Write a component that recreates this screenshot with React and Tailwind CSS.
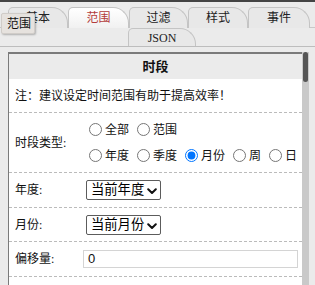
import React from 'react';

const serif = { fontFamily: '"Liberation Serif", "Noto Sans CJK SC", serif' };

const tabs = [
    { label: '基本', w: 'w-[60px]' },
    { label: '范围', w: 'w-[61px]', active: true },
    { label: '过滤', w: 'w-[59px]' },
    { label: '样式', w: 'w-[60px]' },
    { label: '事件', w: 'w-[62px]' },
];

function Tab({ label, w, active, h = 'h-[21px]' }) {
    return (
        <div
            className={`${w} ${h} shrink-0 flex items-center justify-center border-l border-t border-r border-[#c4c4c4] rounded-tl-[5px] rounded-tr-[16px] text-[12px] ${
                active ? 'bg-gradient-to-b from-white to-[#f1f1f1] text-[#b33c3c]' : 'bg-[#e8e8e8] text-[#222]'
            }`}
        >
            {label}
        </div>
    );
}

function Chevron() {
    return (
        <svg width="10" height="7" viewBox="0 0 10 7" className="absolute right-[3px] top-[7px]">
            <path d="M1.2 1.2 L5 5 L8.8 1.2" fill="none" stroke="#111" strokeWidth="2" strokeLinecap="round" strokeLinejoin="round" />
        </svg>
    );
}

function Select({ value }) {
    return (
        <div className="relative w-[75px] h-[20px] ml-[2px] border border-[#5c5c5c] rounded-[2px] bg-white flex items-center pl-[4px] text-[13.3px] text-black">
            {value}
            <Chevron />
        </div>
    );
}

function Radio({ label, checked }) {
    return (
        <label className="flex items-center">
            <input type="radio" name="period" defaultChecked={checked} className="w-[13px] h-[13px] ml-[5px] mr-[3px]" />
            <span>{label}</span>
        </label>
    );
}

export default function App() {
    return (
        <div className="w-[315px] h-[285px] overflow-hidden bg-[#ebebeb] relative text-[#111]" style={serif}>
            <div className="h-[2px] bg-[#444]" />

            {/* tab strip */}
            <div className="border-b border-[#bdbdbd] pb-0">
                <div className="flex pl-[8px] pt-[5px]">
                    {tabs.map((t) => (
                        <Tab key={t.label} {...t} />
                    ))}
                </div>
                <div className="flex pl-[128px] border-t border-[#c8c8c8] -mt-px">
                    <Tab label="JSON" w="w-[68px]" h="h-[18px]" />
                </div>
            </div>

            {/* tooltip */}
            <div className="absolute left-[1px] top-[13px] w-[34px] h-[21px] bg-[#e6e2de] border border-[#d0ccc8] rounded-[2px] shadow-[1px_1px_2px_rgba(0,0,0,0.25)] flex items-center pl-[5px] text-[12px]">
                范围
            </div>

            {/* panel */}
            <div className="flex mt-[5px] ml-[8px]">
                <div className="w-[294px] border-l border-t-2 border-[#7a7a7a] bg-white text-[12px]">
                    <div className="h-[25px] bg-[#ebebeb] flex items-center justify-center font-bold text-[13px]">时段</div>
                    <div className="h-[34px] flex items-center pl-[6px] border-b border-dashed border-[#bbb]">
                        注：建议设定时间范围有助于提高效率！
                    </div>
                    <div className="h-[60px] flex items-center border-b border-dashed border-[#bbb]">
                        <div className="w-[75px] pl-[6px] shrink-0">时段类型:</div>
                        <div className="flex flex-col gap-[8px]">
                            <div className="flex gap-[3px]">
                                <Radio label="全部" />
                                <Radio label="范围" />
                            </div>
                            <div className="flex gap-[3px]">
                                <Radio label="年度" />
                                <Radio label="季度" />
                                <Radio label="月份" checked />
                                <Radio label="周" />
                                <Radio label="日" />
                            </div>
                        </div>
                    </div>
                    <div className="h-[35px] flex items-center border-b border-dashed border-[#bbb]">
                        <div className="w-[75px] pl-[6px] shrink-0">年度:</div>
                        <Select value="当前年度" />
                    </div>
                    <div className="h-[34px] flex items-center border-b border-dashed border-[#bbb]">
                        <div className="w-[75px] pl-[6px] shrink-0">月份:</div>
                        <Select value="当前月份" />
                    </div>
                    <div className="h-[35px] flex items-center border-b border-dashed border-[#bbb]">
                        <div className="w-[74px] pl-[6px] shrink-0">偏移量:</div>
                        <div
                            className="w-[215px] h-[18px] border border-[#d4d4d4] bg-white flex items-center pl-[4px] text-[13px]"
                            style={{ fontFamily: '"Liberation Sans", sans-serif' }}
                        >
                            0
                        </div>
                    </div>
                </div>
                <div className="w-[7px] h-[240px] bg-[#c9c9c9] flex justify-center">
                    <div className="w-[5px] h-[30px] mt-0 bg-[#555] rounded-[3px]" />
                </div>
            </div>
        </div>
    );
}
